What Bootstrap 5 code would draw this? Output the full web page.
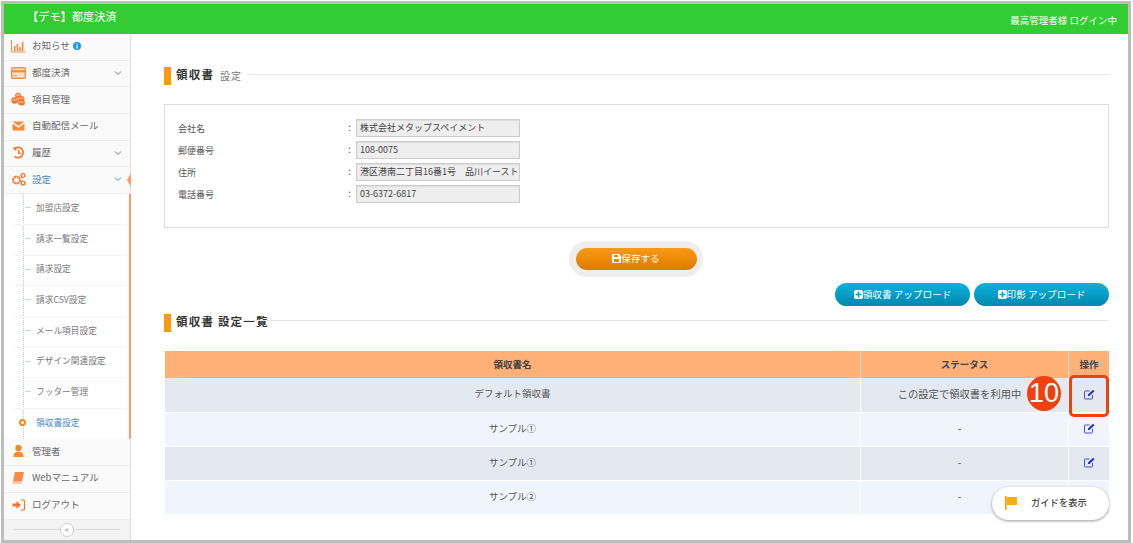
<!DOCTYPE html>
<html lang="ja">
<head>
<meta charset="utf-8">
<title>領収書 設定</title>
<link href="https://cdn.jsdelivr.net/npm/bootstrap@5.3.0/dist/css/bootstrap.min.css" rel="stylesheet">
<style>
html,body{height:100%;overflow:hidden;background:#fff}
body{font-family:"Noto Sans CJK JP","Liberation Sans",sans-serif;font-size:10px;color:#555;line-height:1.2}
.frame{margin:1px 2px 0 1px;height:542px;border:3px solid #bdbdbd;position:relative;overflow:hidden;background:#fff}
.topbar{height:30px;background:#32cd32;color:#fff;padding:0 11px 0 23px}
.brand{font-size:11.2px;margin-top:-5px}
.who{font-size:9.5px;margin-top:4px}
.side{width:127px;flex:none;border-right:1px solid #ddd;background:#fafafa}
.sitem{height:26.7px;padding:0 8px 2px 7px;border-bottom:1px solid #eee;background:#fafafa;color:#666;font-size:9.5px;position:relative;gap:6px}
.sitem svg.ico{width:15px;height:14px;flex:none}
.sitem.on{color:#4a86c8;height:27px}
.sitem.on::after{content:"";position:absolute;right:-1px;top:6px;border:7px solid transparent;border-right:4px solid #ff9a6a;border-left:0}
.chev{width:8px;height:6px;flex:none;margin-left:auto}
.subwrap{background:#fff;height:245px;border-right:2px solid #ff9a6a;margin-right:-1px;padding:0 0 0 10px;position:relative}
.subwrap::before{content:"";position:absolute;left:19px;top:0;bottom:0;border-left:1px dotted #b9cde0}
.sub{height:30.63px;border-bottom:1px solid #f5f5f5;padding:0 0 2px 22px;font-size:8.7px;color:#777;position:relative}
.sub::before{content:"";position:absolute;left:11px;top:13px;width:6px;border-top:1px solid #c8d4de}
.sub.act{color:#4a86c8;border-bottom:0}
.sub.act::before{display:none}
.dotm{position:absolute;left:5px;top:10px;width:7px;height:7px;border:2px solid #f7871e;border-radius:50%;background:#fff;z-index:1}
.collapse-bar{height:20px;background:#f3f3f3;position:relative}
.collapse-bar::before{content:"";position:absolute;left:10px;right:10px;top:9px;border-top:1px solid #ddd}
.collapse-knob{position:absolute;left:56px;top:3px;width:14px;height:14px;border:1px solid #ccc;border-radius:50%;background:#fff;color:#999;font-size:9px;line-height:11px;text-align:center}
.mainarea{padding:33px 19px 0 33px;min-width:0}
.ttl{height:18px;position:relative;gap:5px}
.ttl-mark{width:7px;height:18px;background:#fa9b0e;flex:none}
.ttl-main{font-size:11.5px;font-weight:700;color:#333;letter-spacing:1.2px;margin-top:-2px}
.ttl-sub{font-size:10px;color:#777;margin-top:-1px;margin-left:1px;letter-spacing:1px}
.ttl-line{flex:1;border-top:1px solid #e6e6e6;margin:-4px 0 0 0}
.panel{height:124px;margin-top:19px;border:1px solid #ddd;padding:12px 13px 14px}
.frow{height:22px;margin:0}
.flabel{width:170px;flex:none;color:#555;font-size:9px;padding-top:2px}
.fcolon{width:8px;flex:none;font-size:10px;margin-top:-3px}
.fval{width:164px;height:18px;background:#eee;border:1px solid #ccc;font-size:9px;padding:0 3px;color:#444;line-height:15px;white-space:nowrap;overflow:hidden;box-shadow:inset 0 1px 1px #ddd}
.halo{margin:13px 2px 0 0;height:36px;width:134px;border-radius:18px;background:#eee;padding:7px}
.btn-save,.btn-up{border:0;border-radius:12px;color:#fff;font-size:9.6px;padding:0 0 1px;display:flex;align-items:center;justify-content:center;gap:0}
.btn-save{width:121px;height:22px;background:linear-gradient(#fb9a15,#de7a00)}
.btn-up{width:135px;height:23px;background:linear-gradient(#0cb1dd,#0088ad)}
.btn-save:hover,.btn-up:hover{color:#fff}
.upbar{margin-top:6px;gap:4px}
.t2{margin-top:8px}
.rule2{position:absolute;left:79px;right:0;top:6px;border-top:1px solid #e6e6e6}
.tblwrap{margin-top:19px;margin-left:1px;position:relative}
.rtable{margin:0;table-layout:fixed;width:944px;font-size:9.5px;border-collapse:separate;border-spacing:0;--bs-table-bg:transparent}
.rtable th,.rtable td{padding:0;text-align:center;vertical-align:middle;border:0;color:#555}
.rtable th{background:#ffb076;height:27px;font-weight:700;color:#444;font-size:9.5px;border-right:1px solid #ffe0c8}
.rtable th:last-child,.rtable td:last-child{border-right:0}
.rtable td{border-right:1px solid #fff;padding-bottom:2px}
.rtable td.stat{font-size:10.3px;padding-right:10px}
.ra td{background:#e4e8f0}
.rb td{background:#f0f4fc}
.r1 td{height:34px}.r2 td,.r3 td,.r4 td{height:34px;border-top:1px solid #fff}
.editico{width:11px;height:11px;display:block;margin:0 auto}
.redbox{position:absolute;left:904px;top:24px;width:40px;height:42px;border:3px solid #f0400e;border-radius:5px}
.numcirc{position:absolute;left:862px;top:25px;width:34px;height:35px;border-radius:50%;background:#f0400e;color:#fff;font:27px/35px "Liberation Sans",sans-serif;text-align:center}
.guide{position:absolute;left:988px;top:483px;width:117px;height:33px;border-radius:17px;background:#fff;box-shadow:0 1px 3px rgba(0,0,0,.4);font-size:9.3px;font-weight:500;color:#444;padding:0 0 1px 12px;gap:13px}
</style>
</head>
<body>
<div class="frame">
  <header class="topbar d-flex justify-content-between align-items-center">
    <div class="brand">【デモ】都度決済</div>
    <div class="who">最高管理者様 ログイン中</div>
  </header>
  <div class="d-flex" style="height:506px">
    <nav class="side d-flex flex-column">
      <div class="sitem d-flex align-items-center">
        <svg class="ico" viewBox="0 0 15 14"><path d="M.5 1v12h14" fill="none" stroke="#f98a45"/><path d="M3 7h1.6v5H3zM5.6 5h1.6v7H5.6zM8.2 8h1.6v4H8.2zM10.8 3h1.6v9h-1.6z" fill="#f98a45"/></svg>
        <span>お知らせ</span>
        <svg width="8" height="8" viewBox="0 0 8 8" style="margin-left:-3px"><circle cx="4" cy="4" r="4" fill="#1a9be0"/><path d="M3.4 3.2h1.2v3.2H3.4zM3.4 1.4h1.2v1.1H3.4z" fill="#fff"/></svg>
      </div>
      <div class="sitem d-flex align-items-center">
        <svg class="ico" viewBox="0 0 15 14"><rect x=".7" y="1.7" width="13.6" height="10.6" rx="1.2" fill="#ffe3d0" stroke="#f98a45" stroke-width="1.4"/><path d="M1 4.2h13v2.2H1z" fill="#f98a45"/><path d="M3 9h3v1H3z" fill="#f98a45"/></svg>
        <span>都度決済</span>
        <svg class="chev" viewBox="0 0 8 6"><path d="M1 1.5l3 3 3-3" fill="none" stroke="#777"/></svg>
      </div>
      <div class="sitem d-flex align-items-center">
        <svg class="ico" viewBox="0 0 15 14"><g fill="#f4772a"><ellipse cx="7" cy="3.3" rx="3" ry="2.6"/><ellipse cx="10.5" cy="6.5" rx="3" ry="2.6"/><ellipse cx="3.7" cy="8.5" rx="3.4" ry="3.2"/><ellipse cx="10.5" cy="10.5" rx="3.4" ry="3"/></g><path d="M5 3h4M8.5 6.2h4M1.5 8h4.500M8.500 10h4" stroke="#fff" stroke-width=".7"/></svg>
        <span>項目管理</span>
      </div>
      <div class="sitem d-flex align-items-center">
        <svg class="ico" viewBox="0 0 15 14"><path d="M1.500 2.500h12l-6 4.600z" fill="#f98a35"/><path d="M1.500 4.400l6 4.600 6-4.600v7.100h-12z" fill="#f98a35"/></svg>
        <span>自動配信メール</span>
      </div>
      <div class="sitem d-flex align-items-center">
        <svg class="ico" viewBox="0 0 15 14"><path d="M3 3.200A5.200 5.200 0 1 1 3.600 10.500" fill="none" stroke="#f4772a" stroke-width="1.700"/><path d="M1.500 1.500h3.800v3.800z" fill="#f4772a"/><path d="M7.700 4v3.400h2.600" fill="none" stroke="#f4772a" stroke-width="1.300"/></svg>
        <span>履歴</span>
        <svg class="chev" viewBox="0 0 8 6"><path d="M1 1.500l3 3 3-3" fill="none" stroke="#777"/></svg>
      </div>
      <div class="sitem on d-flex align-items-center">
        <svg class="ico" viewBox="0 0 15 14"><circle cx="5.500" cy="8" r="3.400" fill="none" stroke="#f4772a" stroke-width="2.200" stroke-dasharray="2 .6"/><circle cx="12" cy="3.500" r="1.900" fill="none" stroke="#f4772a" stroke-width="1.400"/><circle cx="12" cy="11" r="1.900" fill="none" stroke="#f4772a" stroke-width="1.400"/></svg>
        <span>設定</span>
        <svg class="chev" viewBox="0 0 8 6"><path d="M1 1.500l3 3 3-3" fill="none" stroke="#4a86c8"/></svg>
      </div>
      <div class="subwrap">
        <div class="sub d-flex align-items-center">加盟店設定</div>
        <div class="sub d-flex align-items-center">請求一覧設定</div>
        <div class="sub d-flex align-items-center">請求設定</div>
        <div class="sub d-flex align-items-center">請求CSV設定</div>
        <div class="sub d-flex align-items-center">メール項目設定</div>
        <div class="sub d-flex align-items-center">デザイン関連設定</div>
        <div class="sub d-flex align-items-center">フッター管理</div>
        <div class="sub act d-flex align-items-center"><span class="dotm"></span>領収書設定</div>
      </div>
      <div class="sitem d-flex align-items-center">
        <svg class="ico" viewBox="0 0 15 14"><circle cx="7.500" cy="4" r="3.200" fill="#f98a25"/><path d="M2.500 13c0-4 2-5.200 5-5.200s5 1.200 5 5.200z" fill="#f98a25"/></svg>
        <span>管理者</span>
      </div>
      <div class="sitem d-flex align-items-center">
        <svg class="ico" viewBox="0 0 15 14"><path d="M4 1h9l-2 9.500H2z" fill="#f98a45"/><path d="M2 10.500h9l-.4 2.500H2.400C1 13 1.200 10.500 2 10.500z" fill="#fbc4a0"/></svg>
        <span>Webマニュアル</span>
      </div>
      <div class="sitem d-flex align-items-center">
        <svg class="ico" viewBox="0 0 15 14"><path d="M1.500 5.500h4V3l4.500 4-4.500 4V8.500h-4z" fill="#f4772a"/><path d="M9.500 2h3a1 1 0 0 1 1 1v8a1 1 0 0 1-1 1h-3" fill="none" stroke="#f4772a" stroke-width="1.200"/></svg>
        <span>ログアウト</span>
      </div>
      <div class="collapse-bar"><span class="collapse-knob">«</span></div>
    </nav>
    <main class="mainarea flex-grow-1">
      <div class="ttl d-flex align-items-center">
        <span class="ttl-mark"></span><span class="ttl-main">領収書</span><span class="ttl-sub">設定</span><span class="ttl-line"></span>
      </div>
      <section class="panel">
        <div class="frow d-flex align-items-center"><span class="flabel">会社名</span><span class="fcolon">:</span><span class="fval">株式会社メタップスペイメント</span></div>
        <div class="frow d-flex align-items-center"><span class="flabel">郵便番号</span><span class="fcolon">:</span><span class="fval">108-0075</span></div>
        <div class="frow d-flex align-items-center"><span class="flabel">住所</span><span class="fcolon">:</span><span class="fval">港区港南二丁目16番1号　品川イースト</span></div>
        <div class="frow d-flex align-items-center"><span class="flabel">電話番号</span><span class="fcolon">:</span><span class="fval">03-6372-6817</span></div>
      </section>
      <div class="d-flex justify-content-center">
        <div class="halo"><button type="button" class="btn btn-save">
          <svg width="9" height="9" viewBox="0 0 9 9"><path d="M0 0h7l2 2v7H0z" fill="#fff"/><path d="M2 1h4v2H2zM2 5h5v3H2z" fill="#e58510"/></svg>保存する</button></div>
      </div>
      <div class="upbar d-flex justify-content-end">
        <button type="button" class="btn btn-up"><svg width="9" height="9" viewBox="0 0 9 9"><rect width="9" height="9" rx="2" fill="#fff"/><path d="M3.700 1.500h1.600v2.200h2.200v1.600H5.300v2.200H3.700V5.300H1.500V3.700h2.200z" fill="#0a9bc4"/></svg>領収書 アップロード</button>
        <button type="button" class="btn btn-up"><svg width="9" height="9" viewBox="0 0 9 9"><rect width="9" height="9" rx="2" fill="#fff"/><path d="M3.700 1.500h1.600v2.200h2.200v1.600H5.300v2.200H3.700V5.300H1.500V3.700h2.200z" fill="#0a9bc4"/></svg>印影 アップロード</button>
      </div>
      <div class="ttl t2 d-flex align-items-center">
        <span class="ttl-mark"></span><span class="ttl-main">領収書 設定一覧</span>
        <span class="rule2"></span>
      </div>
      <div class="tblwrap">
        <table class="table rtable">
          <colgroup><col style="width:696px"><col style="width:208px"><col style="width:40px"></colgroup>
          <thead><tr><th>領収書名</th><th>ステータス</th><th>操作</th></tr></thead>
          <tbody>
            <tr class="ra r1"><td>デフォルト領収書</td><td class="stat">この設定で領収書を利用中</td><td><svg class="editico" viewBox="0 0 11 11"><path d="M8.500 6v3a1 1 0 0 1-1 1h-6a1 1 0 0 1-1-1V3a1 1 0 0 1 1-1h4" fill="none" stroke="#4b4bdc"/><path d="M4 5.500L9 .7l1.500 1.500-5 4.800H4z" fill="#2d2dd0"/></svg></td></tr>
            <tr class="rb r2"><td>サンプル①</td><td class="stat">-</td><td><svg class="editico" viewBox="0 0 11 11"><path d="M8.500 6v3a1 1 0 0 1-1 1h-6a1 1 0 0 1-1-1V3a1 1 0 0 1 1-1h4" fill="none" stroke="#4b4bdc"/><path d="M4 5.500L9 .7l1.500 1.500-5 4.800H4z" fill="#2d2dd0"/></svg></td></tr>
            <tr class="ra r3"><td>サンプル①</td><td class="stat">-</td><td><svg class="editico" viewBox="0 0 11 11"><path d="M8.500 6v3a1 1 0 0 1-1 1h-6a1 1 0 0 1-1-1V3a1 1 0 0 1 1-1h4" fill="none" stroke="#4b4bdc"/><path d="M4 5.500L9 .7l1.500 1.500-5 4.800H4z" fill="#2d2dd0"/></svg></td></tr>
            <tr class="rb r4"><td>サンプル②</td><td class="stat">-</td><td></td></tr>
          </tbody>
        </table>
        <span class="redbox"></span>
        <span class="numcirc">10</span>
      </div>
    </main>
  </div>
  <div class="guide d-flex align-items-center">
    <svg width="14" height="14" viewBox="0 0 14 14"><path d="M1 0h1.600v14H1z" fill="#fa9b0e"/><path d="M2.600 1H13v8H2.600z" fill="#fbae14"/></svg>
    <span>ガイドを表示</span>
  </div>
</div>
</body>
</html>
